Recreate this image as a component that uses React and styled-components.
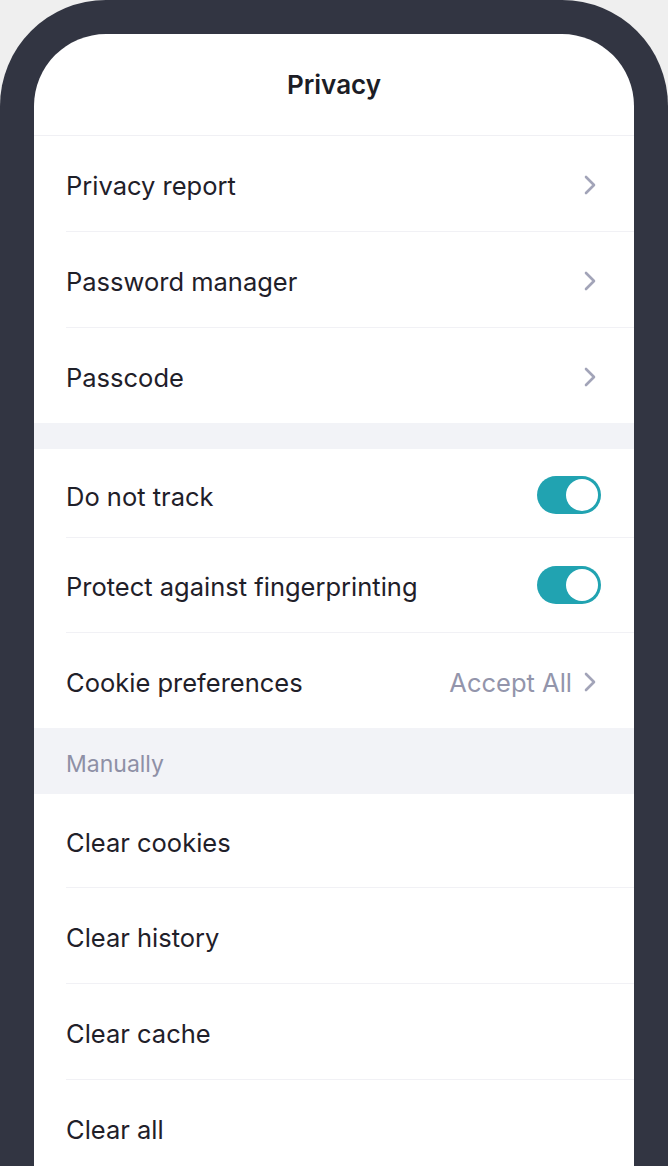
import styled, { createGlobalStyle } from "styled-components";

const GlobalStyle = createGlobalStyle`
  html, body {
    margin: 0;
    padding: 0;
    background: #efefef;
  }
  body {
    font-family: Inter, "Noto Sans", sans-serif;
    -webkit-font-smoothing: antialiased;
  }
`;

const Chevron = () => (
  <ChevronIcon width="14" height="20" viewBox="0 0 14 20" fill="none">
    <path
      d="M3 2 L11 10 L3 18"
      stroke="#a2a4b8"
      strokeWidth="2.6"
      strokeLinecap="round"
      strokeLinejoin="round"
    />
  </ChevronIcon>
);

const App = () => {
  return (
    <>
      <GlobalStyle />
      <Phone>
        <Screen>
          <TitleBar>Privacy</TitleBar>
          <Group>
            <Row>
              <Label>Privacy report</Label>
              <Chevron />
            </Row>
            <Row>
              <Label>Password manager</Label>
              <Chevron />
            </Row>
            <Row last>
              <Label>Passcode</Label>
              <Chevron />
            </Row>
          </Group>
          <Spacer />
          <Group>
            <Row height={88} offset={7}>
              <Label>Do not track</Label>
              <Toggle />
            </Row>
            <Row height={94}>
              <Label>Protect against fingerprinting</Label>
              <Toggle />
            </Row>
            <Row last>
              <Label>Cookie preferences</Label>
              <Right>
                <Value>Accept All</Value>
                <Chevron />
              </Right>
            </Row>
          </Group>
          <SectionHeader>Manually</SectionHeader>
          <Group>
            <Row height={93}>
              <Label>Clear cookies</Label>
            </Row>
            <Row>
              <Label>Clear history</Label>
            </Row>
            <Row>
              <Label>Clear cache</Label>
            </Row>
            <Row last>
              <Label>Clear all</Label>
            </Row>
          </Group>
        </Screen>
      </Phone>
    </>
  );
};

const Phone = styled.div`
  width: 668px;
  height: 1166px;
  box-sizing: border-box;
  background: #323542;
  border-radius: 106px 106px 0 0;
  padding: 34px 34px 0 34px;
  overflow: hidden;
`;

const Screen = styled.div`
  background: #ffffff;
  height: 100%;
  border-radius: 72px 72px 0 0;
  overflow: hidden;
  display: flex;
  flex-direction: column;
`;

const TitleBar = styled.div`
  height: 102px;
  flex-shrink: 0;
  box-sizing: border-box;
  border-bottom: 1px solid #f0f0f4;
  display: flex;
  align-items: center;
  justify-content: center;
  font-size: 26px;
  font-weight: 600;
  color: #1c1d26;
`;

const Group = styled.div`
  background: #fff;
  padding-left: 32px;
  flex-shrink: 0;
`;

const Row = styled.div`
  height: ${p => (p.height || 95) - (p.offset || 3)}px;
  padding-top: ${p => p.offset || 3}px;
  display: flex;
  align-items: center;
  justify-content: space-between;
  padding-right: 33px;
  border-bottom: ${p => (p.last ? "none" : "1px solid #f1f1f5")};
`;

const Label = styled.span`
  font-size: 25.5px;
  color: #1f2029;
`;

const Right = styled.div`
  display: flex;
  align-items: center;
  gap: 11px;
`;

const Value = styled.span`
  font-size: 25.5px;
  color: #9395ab;
`;

const ChevronIcon = styled.svg`
  margin-right: 4px;
  flex-shrink: 0;
`;

const Toggle = styled.div`
  width: 64px;
  height: 38px;
  border-radius: 19px;
  background: #21a3b1;
  position: relative;
  margin-top: -3px;
  &::after {
    content: "";
    position: absolute;
    top: 3px;
    right: 3px;
    width: 32px;
    height: 32px;
    border-radius: 50%;
    background: #fff;
  }
`;

const Spacer = styled.div`
  height: 26px;
  background: #f2f3f7;
  flex-shrink: 0;
`;

const SectionHeader = styled.div`
  height: 60px;
  padding-top: 6px;
  flex-shrink: 0;
  background: #f2f3f7;
  display: flex;
  align-items: center;
  padding-left: 32px;
  font-size: 23px;
  color: #8e90a6;
`;

export default App;
